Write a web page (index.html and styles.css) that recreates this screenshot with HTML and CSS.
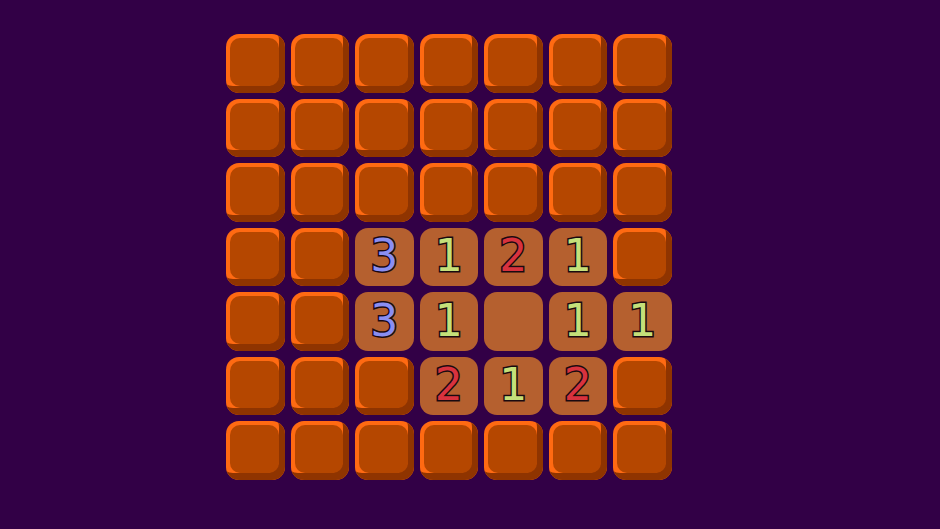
FILE: index.html
```html
<!DOCTYPE html>
<html>
<head>
<meta charset="utf-8">
<link rel="stylesheet" href="styles.css">
</head>
<body>
<div class="board">
  <div class="tile closed"></div><div class="tile closed"></div><div class="tile closed"></div><div class="tile closed"></div><div class="tile closed"></div><div class="tile closed"></div><div class="tile closed"></div>
  <div class="tile closed"></div><div class="tile closed"></div><div class="tile closed"></div><div class="tile closed"></div><div class="tile closed"></div><div class="tile closed"></div><div class="tile closed"></div>
  <div class="tile closed"></div><div class="tile closed"></div><div class="tile closed"></div><div class="tile closed"></div><div class="tile closed"></div><div class="tile closed"></div><div class="tile closed"></div>
  <div class="tile closed"></div><div class="tile closed"></div><div class="tile open"><span class="num n3">3</span></div><div class="tile open"><span class="num n1">1</span></div><div class="tile open"><span class="num n2">2</span></div><div class="tile open"><span class="num n1">1</span></div><div class="tile closed"></div>
  <div class="tile closed"></div><div class="tile closed"></div><div class="tile open"><span class="num n3">3</span></div><div class="tile open"><span class="num n1">1</span></div><div class="tile open"></div><div class="tile open"><span class="num n1">1</span></div><div class="tile open"><span class="num n1">1</span></div>
  <div class="tile closed"></div><div class="tile closed"></div><div class="tile closed"></div><div class="tile open"><span class="num n2">2</span></div><div class="tile open"><span class="num n1">1</span></div><div class="tile open"><span class="num n2">2</span></div><div class="tile closed"></div>
  <div class="tile closed"></div><div class="tile closed"></div><div class="tile closed"></div><div class="tile closed"></div><div class="tile closed"></div><div class="tile closed"></div><div class="tile closed"></div>
</div>
</body>
</html>
```
FILE: styles.css
```css
html, body {
  margin: 0;
  padding: 0;
  background: #320046;
  width: 940px;
  height: 529px;
  overflow: hidden;
}
body {
  padding: 34px 0 0 226px;
  box-sizing: border-box;
}
.board {
  display: grid;
  grid-template-columns: repeat(7, 58.5px);
  grid-auto-rows: 58.5px;
  gap: 6px;
}
.tile {
  position: relative;
  border-radius: 13px;
  display: flex;
  align-items: center;
  justify-content: center;
}
.closed {
  background: #ff6a12;
  box-shadow: inset -6px -7px 0 #8f3400;
}
.closed::before {
  content: "";
  position: absolute;
  top: 4px;
  left: 4px;
  right: 6px;
  bottom: 7px;
  border-radius: 10px;
  background: #b54700;
}
.open {
  background: #b5602f;
}
.num {
  font-family: "DejaVu Sans", sans-serif;
  font-weight: 400;
  font-size: 44px;
  line-height: 1;
  -webkit-text-stroke: 3px #1a0a10;
  paint-order: stroke fill;
  margin-top: -1px;
}
.n1 { color: #c4e07a; }
.n2 { color: #d8323e; }
.n3 { color: #8a8ef2; }
```
